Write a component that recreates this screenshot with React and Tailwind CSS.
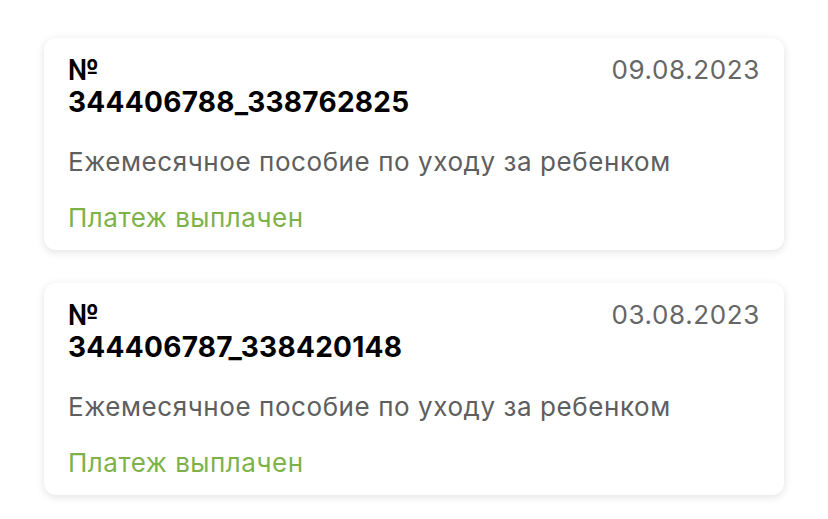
import React from 'react';

const payments = [
  { id: '344406788_338762825', date: '09.08.2023' },
  { id: '344406787_338420148', date: '03.08.2023' },
];

function PaymentCard({ id, date }) {
  return (
    <div className="rounded-xl bg-white px-6 pt-4 pb-4 shadow-[0_2px_8px_rgba(0,0,0,0.12)]">
      <div className="flex items-start justify-between">
        <div className="text-[28px] font-bold leading-8 tracking-[0.01em] text-black">
          №<br />
          {id}
        </div>
        <div className="text-[26px] leading-8 tracking-[0.024em] text-[#666666]">{date}</div>
      </div>
      <p className="mt-7 text-[26px] leading-8 tracking-[0.022em] text-[#5e5e5e]">
        Ежемесячное пособие по уходу за ребенком
      </p>
      <p className="mt-6 text-[26px] leading-8 tracking-[0.02em] text-[#7db249]">Платеж выплачен</p>
    </div>
  );
}

export default function App() {
  return (
    <div className="min-h-screen bg-white px-11 pt-[38px] font-['Inter',sans-serif]">
      <div className="flex flex-col gap-[33px]">
        {payments.map((p) => (
          <PaymentCard key={p.id} {...p} />
        ))}
      </div>
    </div>
  );
}
